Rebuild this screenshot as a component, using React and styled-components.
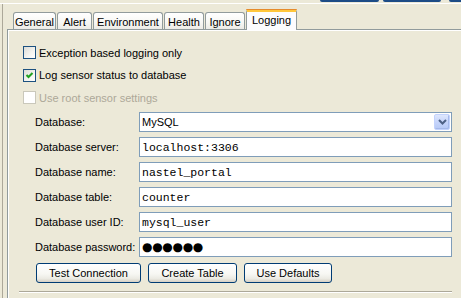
import React from 'react';
import styled, { createGlobalStyle } from 'styled-components';

const Global = createGlobalStyle`
  html, body { margin: 0; padding: 0; background: #ece9d8; }
  body { font-family: "Liberation Sans", Arial, sans-serif; font-size: 11px; color: #000; }
  * { box-sizing: border-box; }
`;

const Screen = styled.div`
  width: 461px;
  height: 298px;
  overflow: hidden;
  background: #ece9d8;
  display: flex;
  flex-direction: column;
`;

const TopEdge = styled.div`
  height: 4px;
  flex: none;
  display: flex;
  align-items: flex-start;
  padding-left: 320px;
  border-bottom: 1px solid #fff;
`;

const Stub = styled.div`
  flex: none;
  width: ${p => p.$w}px;
  margin-right: ${p => p.$gap || 0}px;
  height: 1.5px;
  background: #1d4c86;
  border-radius: 0 0 2px 2px;
`;

const Frame = styled.div`
  flex: 1;
  margin-left: 2px;
  border-left: 1px solid #aca899;
  display: flex;
  flex-direction: column;
  padding-top: 5px;
`;

const TabRow = styled.div`
  display: flex;
  align-items: flex-end;
  gap: 1px;
  height: 21px;
  padding-left: 10px;
  margin-bottom: -1px;
  position: relative;
  z-index: 1;
`;

const Tab = styled.div`
  flex: none;
  width: ${p => p.$w}px;
  height: 17px;
  margin-bottom: 1px;
  border: 1px solid #919b9c;
  border-bottom: none;
  border-radius: 3px 3px 0 0;
  background: linear-gradient(180deg, #ffffff 0%, #f7f7f4 60%, #ecebe6 100%);
  display: flex;
  align-items: center;
  justify-content: center;
  padding-top: 1px;
  white-space: nowrap;
`;

const ActiveTab = styled(Tab)`
  height: 21px;
  margin-bottom: 0;
  border-top: 3px solid #ffc73c;
  background: #fcfcfe;
  position: relative;
  padding-top: 0;
  padding-bottom: 2px;
  &::before {
    content: "";
    position: absolute;
    left: -1px;
    right: -1px;
    top: -3px;
    height: 1px;
    background: #e68b2c;
    border-radius: 3px 3px 0 0;
  }
`;

const Panel = styled.div`
  flex: 1;
  margin-left: 4px;
  border-top: 1px solid #919b9c;
  border-left: 1px solid #919b9c;
  box-shadow: inset 1px 1px 0 #fff;
  padding: 16px 0 0 15px;
  display: flex;
  flex-direction: column;
`;

const Checks = styled.div`
  display: flex;
  flex-direction: column;
  gap: 9.5px;
`;

const CheckRow = styled.label`
  display: flex;
  align-items: center;
  gap: 3px;
  height: 13px;
  color: ${p => (p.$disabled ? '#aca899' : '#000')};
  white-space: nowrap;
`;

const Box = styled.span`
  flex: none;
  width: 13px;
  height: 13px;
  border: 1px solid ${p => (p.$disabled ? '#cac8bb' : '#1c5180')};
  background: ${p => (p.$disabled ? '#fff' : 'linear-gradient(135deg, #dcdcd7 0%, #f4f4f0 60%, #ffffff 100%)')};
  display: flex;
  align-items: center;
  justify-content: center;
`;

const Form = styled.div`
  margin: 8px 0 0 12px;
  display: grid;
  grid-template-columns: 104px 313px;
  grid-auto-rows: 20px;
  row-gap: 5px;
  align-items: center;
`;

const Label = styled.span`
  white-space: nowrap;
`;

const Field = styled.div`
  height: 20px;
  border: 1px solid #7f9db9;
  background: #fff;
  padding-left: 2px;
  display: flex;
  align-items: center;
  font-family: ${p => (p.$mono ? '"Liberation Mono", "Courier New", monospace' : '"Liberation Sans", Arial, sans-serif')};
  font-size: ${p => (p.$mono ? '11.5px' : '11px')};
  white-space: nowrap;
`;

const Combo = styled(Field)`
  padding: 1px 1px 1px 2px;
  align-items: stretch;
`;

const ComboText = styled.span`
  flex: 1;
  display: flex;
  align-items: center;
`;

const ComboButton = styled.span`
  flex: none;
  width: 16px;
  border: 1px solid #c3d3fd;
  border-radius: 2px;
  background: linear-gradient(180deg, #dfe7fd 0%, #c6d5fb 50%, #b6c9f6 100%);
  box-shadow: inset -1px -1px 0 #a5b9ea;
  display: flex;
  align-items: center;
  justify-content: center;
`;

const Dots = styled.span`
  font-family: "DejaVu Sans", sans-serif;
  font-size: 12px;
  letter-spacing: -0.3px;
`;

const Buttons = styled.div`
  display: flex;
  gap: 7px;
  margin: 6px 0 0 13px;
`;

const Button = styled.button`
  flex: none;
  width: ${p => p.$w}px;
  height: 20px;
  padding: 0;
  border: 1px solid #003c74;
  border-radius: 3px;
  background: linear-gradient(180deg, #ffffff 0%, #f7f7f3 55%, #ecebe4 80%, #d6d0c5 100%);
  font-family: "Liberation Sans", Arial, sans-serif;
  font-size: 11px;
  color: #000;
  white-space: nowrap;
`;

const Separator = styled.div`
  margin: 8px 0 0 -4px;
  width: 433px;
  height: 2px;
  border-top: 1px solid #aca899;
  border-bottom: 1px solid #fff;
`;

function Check({ checked, disabled, children }) {
  return (
    <CheckRow $disabled={disabled}>
      <Box $disabled={disabled}>
        {checked && (
          <svg width="9" height="9" viewBox="0 0 9 9">
            <polyline points="1.5,4 3.5,6 7.5,2" fill="none" stroke="#21a121" strokeWidth="2" />
          </svg>
        )}
      </Box>
      {children}
    </CheckRow>
  );
}

const tabs = [
  ['General', 43],
  ['Alert', 35],
  ['Environment', 70],
  ['Health', 40],
  ['Ignore', 40],
];

export default function App() {
  return (
    <Screen>
      <Global />
      <TopEdge>
        <Stub $w={59} $gap={4} />
        <Stub $w={58} $gap={8} />
        <Stub $w={40} />
      </TopEdge>
      <Frame>
        <TabRow>
          {tabs.map(([t, w]) => (
            <Tab key={t} $w={w}>{t}</Tab>
          ))}
          <ActiveTab $w={51}>Logging</ActiveTab>
        </TabRow>
        <Panel>
          <Checks>
            <Check>Exception based logging only</Check>
            <Check checked>Log sensor status to database</Check>
            <Check disabled>Use root sensor settings</Check>
          </Checks>
          <Form>
            <Label>Database:</Label>
            <Combo>
              <ComboText>MySQL</ComboText>
              <ComboButton>
                <svg width="9" height="6" viewBox="0 0 9 6">
                  <polyline points="1,1 4.5,4.5 8,1" fill="none" stroke="#4d6185" strokeWidth="2" />
                </svg>
              </ComboButton>
            </Combo>
            <Label>Database server:</Label>
            <Field $mono>localhost:3306</Field>
            <Label>Database name:</Label>
            <Field $mono>nastel_portal</Field>
            <Label>Database table:</Label>
            <Field $mono>counter</Field>
            <Label>Database user ID:</Label>
            <Field $mono>mysql_user</Field>
            <Label>Database password:</Label>
            <Field><Dots>●●●●●●</Dots></Field>
          </Form>
          <Buttons>
            <Button $w={105}>Test Connection</Button>
            <Button $w={89}>Create Table</Button>
            <Button $w={88}>Use Defaults</Button>
          </Buttons>
          <Separator />
        </Panel>
      </Frame>
    </Screen>
  );
}
